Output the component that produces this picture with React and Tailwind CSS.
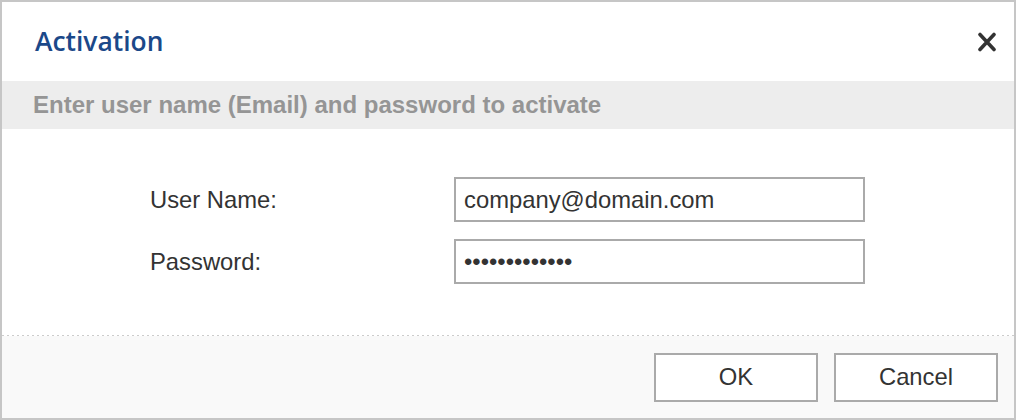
export default function App() {
  return (
    <div className="w-[1016px] h-[420px] border-2 border-[#c6c6c6] bg-white flex flex-col" style={{ fontFamily: '"Liberation Sans", Arial, sans-serif' }}>
      <div className="h-[79px] flex items-center justify-between pl-[33px] pr-[18px]">
        <div className="text-[26.4px] font-semibold text-[#1b4889]" style={{ fontFamily: '"Open Sans", sans-serif' }}>Activation</div>
        <svg width="18" height="20" viewBox="0 0 18 20" className="mt-[1px]">
          <path d="M2 2.5 L16 17.5 M16 2.5 L2 17.5" stroke="#333" strokeWidth="3.6" strokeLinecap="round" />
        </svg>
      </div>
      <div className="h-[48px] bg-[#ededed] flex items-center pl-[31px]">
        <span className="text-[24px] font-bold text-[#959595]">Enter user name (Email) and password to activate</span>
      </div>
      <div className="flex-1 flex flex-col pt-[48px] pl-[148px] gap-[17px]">
        <div className="flex items-center">
          <span className="w-[304px] text-[23.8px] text-[#333]">User Name:</span>
          <div className="w-[411px] h-[45px] border-2 border-[#aaaaaa] flex items-center pl-[8px] text-[23.8px] text-[#333]">company@domain.com</div>
        </div>
        <div className="flex items-center">
          <span className="w-[304px] text-[23.8px] text-[#333]">Password:</span>
          <div className="w-[411px] h-[45px] border-2 border-[#aaaaaa] flex items-center pl-[8px] text-[23.8px] text-[#333]">•••••••••••••</div>
        </div>
      </div>
      <div className="h-[1px] bg-[linear-gradient(to_right,#cccccc_50%,transparent_50%)] bg-[length:5px_1px]"></div>
      <div className="h-[82px] bg-[#f9f9f9] flex items-center justify-end gap-[16px] pr-[16px]">
        <button className="w-[164px] h-[49px] border-2 border-[#aaaaaa] bg-white text-[23.8px] text-[#333]">OK</button>
        <button className="w-[164px] h-[49px] border-2 border-[#aaaaaa] bg-white text-[23.8px] text-[#333]">Cancel</button>
      </div>
    </div>
  );
}
